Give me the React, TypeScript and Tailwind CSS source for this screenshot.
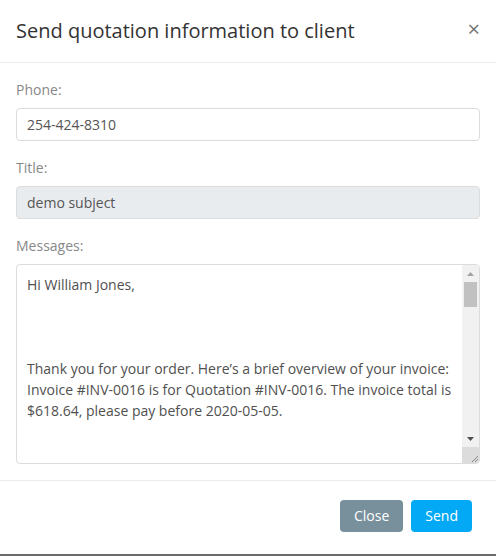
import React from "react";

export default function App() {
  return (
    <div
      className="w-[496px] h-[556px] bg-white flex flex-col overflow-hidden border-b-2 border-[#6b6b6b]"
      style={{ fontFamily: '"Open Sans", sans-serif' }}
    >
      <div className="flex items-center justify-between pl-4 pr-[16px] h-[63px] border-b border-[#e9ecef]">
        <h5 className="text-[20px] text-[#333] leading-[30px]">Send quotation information to client</h5>
        <span className="text-[22px] leading-none text-[#777] -mt-[6px]">×</span>
      </div>
      <div className="px-4 pt-4 pb-4 flex flex-col text-[14px]">
        <label className="text-[#888] leading-[21px] mb-2">Phone:</label>
        <div className="h-[33px] border border-[#dcdcdc] rounded-[4px] px-[10px] flex items-center text-[#555]">254-424-8310</div>
        <label className="text-[#888] leading-[21px] mb-2 mt-4">Title:</label>
        <div className="h-[33px] border border-[#dcdcdc] bg-[#e9ecef] rounded-[4px] px-[10px] flex items-center text-[#555]">demo subject</div>
        <label className="text-[#888] leading-[21px] mb-2 mt-4">Messages:</label>
        <div className="h-[200px] border border-[#dcdcdc] rounded-[4px] flex overflow-hidden text-[#505050]">
          <div className="flex-1 pl-[10px] pt-[9px] leading-[21px] whitespace-pre-wrap">
            {"Hi William Jones,\n\n\n\nThank you for your order. Here’s a brief overview of your invoice: Invoice #INV-0016 is for Quotation #INV-0016. The invoice total is $618.64, please pay before 2020-05-05."}
          </div>
          <div className="w-[17px] bg-[#f1f1f1] flex flex-col items-center">
            <div className="h-[17px] flex items-center justify-center">
              <svg width="7" height="4" viewBox="0 0 7 4"><path d="M3.5 0 L7 4 L0 4 Z" fill="#a3a3a3" /></svg>
            </div>
            <div className="w-[13px] h-[25px] bg-[#c1c1c1]" />
            <div className="flex-1" />
            <div className="h-[17px] flex items-center justify-center">
              <svg width="7" height="4" viewBox="0 0 7 4"><path d="M0 0 L7 0 L3.5 4 Z" fill="#505050" /></svg>
            </div>
            <div className="h-[16px] w-full bg-[#dcdcdc] flex items-end justify-end">
              <svg width="9" height="9" viewBox="0 0 9 9"><path d="M8 2 L2 8 M8 5 L5 8" stroke="#888" strokeWidth="1" /></svg>
            </div>
          </div>
        </div>
      </div>
      <div className="border-t border-[#e9ecef] flex-1 flex items-center justify-end gap-2 px-6 pb-[4px]">
        <button className="h-[32px] px-[14px] rounded-[4px] bg-[#78909c] text-white text-[14px]">Close</button>
        <button className="h-[32px] px-[14px] rounded-[4px] bg-[#03a9f4] text-white text-[14px]">Send</button>
      </div>
    </div>
  );
}
